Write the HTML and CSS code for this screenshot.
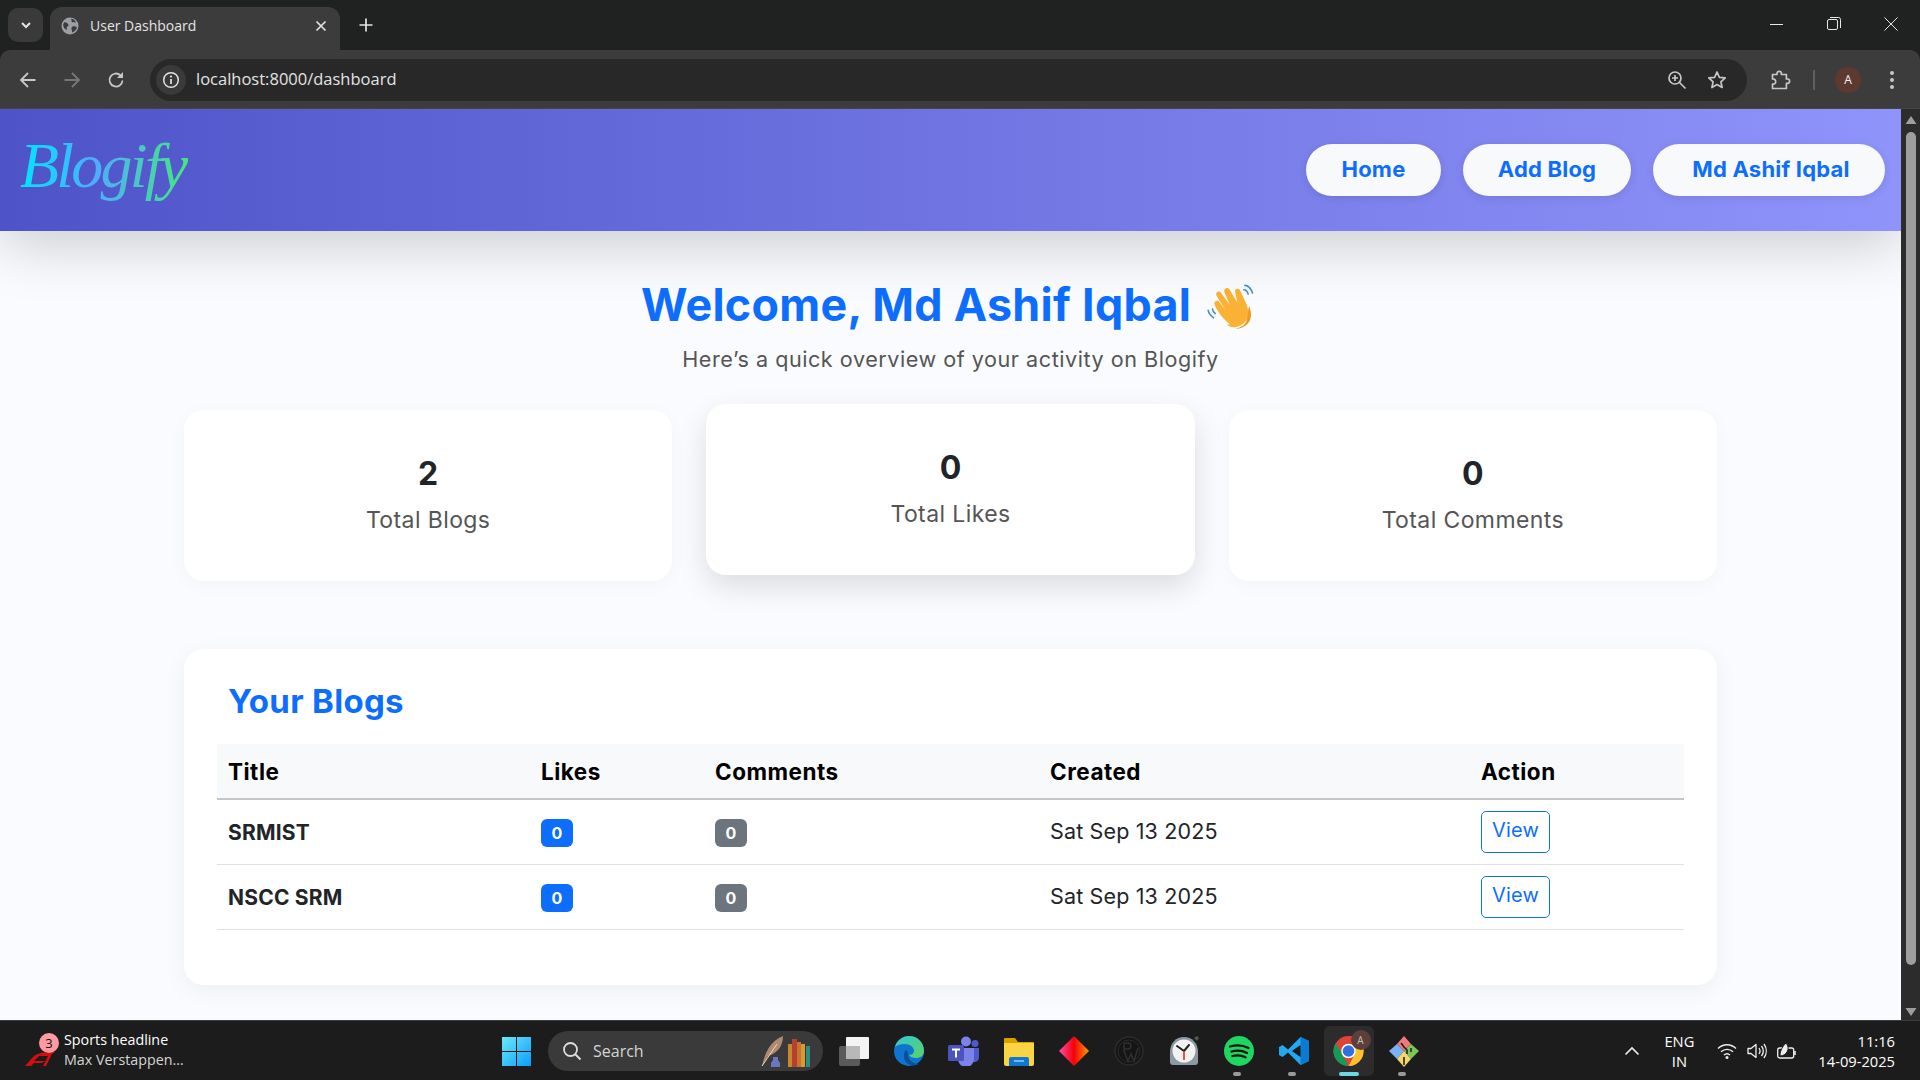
FILE: index.html
```html
<!DOCTYPE html>
<html lang="en">
<head>
<meta charset="utf-8">
<title>User Dashboard</title>
<link rel="stylesheet" href="styles.css">
</head>
<body>
<div class="browser">
  <div class="tabstrip">
    <div class="tablist-btn">
      <svg width="14" height="14" viewBox="0 0 14 14"><path d="M3 5l4 4 4-4" fill="none" stroke="#e3e3e3" stroke-width="2"/></svg>
    </div>
    <div class="tab">
      <svg class="tab-fav" width="18" height="18" viewBox="0 0 18 18"><circle cx="9" cy="9" r="8.5" fill="#9aa0a6"/><path d="M3 5.5c2-.5 3 .5 4 1.5s.5 2-.5 2.5-1 2-.5 3.500c-2-.5-4-3-3.800-5.500zM10 1.500c1 1.500 0 3 1 3.500s2.500 0 4 .5c-.8-2-2.800-3.700-5-4zM11.500 9.500c1.500-.5 3.500 0 4.500 1-.5 2-2.500 4.500-5 5 .5-1.500-.5-2.500-.5-3.500s0-2 1-2.500z" fill="#3c3c3c"/></svg>
      <span class="tab-title">User Dashboard</span>
      <svg class="tab-close" width="12" height="12" viewBox="0 0 12 12"><path d="M1.500 1.500l9 9m0-9l-9 9" stroke="#e3e3e3" stroke-width="1.700"/></svg>
    </div>
    <svg class="tab-new" width="14" height="14" viewBox="0 0 14 14"><path d="M7 .5v13M.5 7h13" stroke="#e3e3e3" stroke-width="1.700"/></svg>
    <div class="winctl">
      <svg width="14" height="14" viewBox="0 0 14 14"><path d="M0 7.500h13" stroke="#e8e8e8"/></svg>
      <svg width="14" height="14" viewBox="0 0 14 14"><rect x=".5" y="2.500" width="10" height="10" rx="1.500" fill="none" stroke="#e8e8e8"/><path d="M3 .5h8.500a2 2 0 0 1 2 2V11" fill="none" stroke="#e8e8e8"/></svg>
      <svg width="14" height="14" viewBox="0 0 14 14"><path d="M.5.5l13 13m0-13l-13 13" stroke="#e8e8e8"/></svg>
    </div>
  </div>

  <div class="toolbar">
    <div class="nav-icons">
      <svg width="18" height="18" viewBox="0 0 18 18"><path d="M16.500 9H2M9 2L2 9l7 7" fill="none" stroke="#c7c7c7" stroke-width="1.800"/></svg>
      <svg width="18" height="18" viewBox="0 0 18 18"><path d="M1.500 9H16M9 2l7 7-7 7" fill="none" stroke="#777" stroke-width="1.800"/></svg>
      <svg width="18" height="18" viewBox="0 0 18 18"><path d="M15.500 9.500A6.500 6.500 0 1 1 13.500 4.300L15.500 6" fill="none" stroke="#c7c7c7" stroke-width="1.800"/><path d="M16 1v6h-6z" fill="#c7c7c7"/></svg>
    </div>
    <div class="omnibox">
      <div class="info-chip">
        <svg width="18" height="18" viewBox="0 0 18 18"><circle cx="9" cy="9" r="7.300" fill="none" stroke="#e3e3e3" stroke-width="1.500"/><path d="M9 8v5" stroke="#e3e3e3" stroke-width="1.700"/><circle cx="9" cy="5.500" r="1.100" fill="#e3e3e3"/></svg>
      </div>
      <span class="url">localhost:8000/dashboard</span>
      <div class="omni-actions">
        <svg width="20" height="20" viewBox="0 0 20 20"><circle cx="8" cy="8" r="6" fill="none" stroke="#c7c7c7" stroke-width="1.700"/><path d="M12.500 12.500l6 6M8 5v6M5 8h6" stroke="#c7c7c7" stroke-width="1.700"/></svg>
        <svg width="20" height="20" viewBox="0 0 20 20"><path d="M10 2l2.400 5.300 5.800.6-4.300 3.900 1.200 5.700-5.100-2.900-5.100 2.900 1.200-5.700L1.800 7.900l5.800-.6z" fill="none" stroke="#c7c7c7" stroke-width="1.700" stroke-linejoin="round"/></svg>
      </div>
    </div>
    <div class="tool-icons">
      <svg width="20" height="22" viewBox="0 0 20 22"><path d="M1.500 5.500h4.500v-1a2.200 2.200 0 0 1 4.400 0v1h5v4.500h1a2.200 2.200 0 0 1 0 4.400h-1v5.100H1.500v-4.500c2 .5 3.200-.8 3.200-2.300S3.500 9.500 1.500 10z" fill="none" stroke="#c7c7c7" stroke-width="1.700" stroke-linejoin="round"/></svg>
      <span class="tool-sep"></span>
      <span class="avatar">A</span>
      <svg width="6" height="20" viewBox="0 0 6 20"><circle cx="3" cy="3" r="2" fill="#c7c7c7"/><circle cx="3" cy="10" r="2" fill="#c7c7c7"/><circle cx="3" cy="17" r="2" fill="#c7c7c7"/></svg>
    </div>
  </div>

  <div class="viewport">
    <div class="page">
      <header class="site-header">
        <a class="logo">Blogify</a>
        <nav class="site-nav">
          <a class="pill pill-home">Home</a>
          <a class="pill pill-add">Add Blog</a>
          <a class="pill pill-user">Md Ashif Iqbal</a>
        </nav>
      </header>
      <main class="content">
        <div class="welcome">
          <h1 class="welcome-title">Welcome, Md Ashif Iqbal
            <svg class="wave" width="54" height="50" viewBox="0 0 50 46">
              <path d="M22 39C14 33 9 24 8 21c-1-3 2-5 4-3l6 8-8-13c-2-3 2-6 4-3l8 11-5-12c-1-3 3-5 5-2l7 12-2-10c-.5-3 3-4 4.500-1.500l6 13c3 8 2 14-3 18s-12 4-15 1z" fill="#f9b233"/>
              <path d="M40 22c3 8 2 14-3 18-3 2.500-7 3.500-10 3 6-1 10-4 11-9 1-4 .5-8 2-12z" fill="#ee9a1f"/>
              <path d="M36 3c3 0 6 3 7 7M35 7c2 0 3.500 2 4 4M2 26c.5 3 2 5 5 7M6 25c.3 2 1 3 2.500 4" fill="none" stroke="#4a90c8" stroke-width="1.500" stroke-linecap="round"/>
            </svg>
          </h1>
          <p class="welcome-sub">Here’s a quick overview of your activity on Blogify</p>
        </div>
        <section class="stats">
          <div class="stat-card"><div class="stat-num">2</div><div class="stat-label">Total Blogs</div></div>
          <div class="stat-card stat-raised"><div class="stat-num">0</div><div class="stat-label">Total Likes</div></div>
          <div class="stat-card"><div class="stat-num">0</div><div class="stat-label">Total Comments</div></div>
        </section>
        <section class="blogs-card">
          <h2 class="blogs-title">Your Blogs</h2>
          <table class="blogs-table">
            <colgroup><col class="c-title"><col class="c-likes"><col class="c-comments"><col class="c-created"><col class="c-action"></colgroup>
            <thead>
              <tr><th>Title</th><th>Likes</th><th>Comments</th><th>Created</th><th>Action</th></tr>
            </thead>
            <tbody>
              <tr>
                <td class="blog-name">SRMIST</td>
                <td><span class="badge badge-blue">0</span></td>
                <td><span class="badge badge-gray">0</span></td>
                <td class="blog-date">Sat Sep 13 2025</td>
                <td><a class="view-btn">View</a></td>
              </tr>
              <tr>
                <td class="blog-name">NSCC SRM</td>
                <td><span class="badge badge-blue">0</span></td>
                <td><span class="badge badge-gray">0</span></td>
                <td class="blog-date">Sat Sep 13 2025</td>
                <td><a class="view-btn">View</a></td>
              </tr>
            </tbody>
          </table>
        </section>
      </main>
    </div>
    <div class="scrollbar">
      <svg width="12" height="10" viewBox="0 0 12 10"><path d="M6 1l5.500 8H.5z" fill="#9e9e9e"/></svg>
      <div class="scroll-thumb"></div>
      <svg width="12" height="10" viewBox="0 0 12 10"><path d="M6 9L.5 1h11z" fill="#9e9e9e"/></svg>
    </div>
  </div>

  <footer class="taskbar">
    <div class="news">
      <div class="news-icon">
        <svg width="30" height="16" viewBox="0 0 30 16"><path d="M0 16L8 7C12 3 18 2 30 2L24 6H14L9 11h11l-3 2H9L6 16zM27 4l-6 12h-3l6-12z" fill="#d40d0d"/></svg>
        <span class="news-badge">3</span>
      </div>
      <div class="news-text"><span class="news-head">Sports headline</span><span class="news-sub">Max Verstappen...</span></div>
    </div>
    <div class="task-center">
      <svg class="win" width="29" height="29" viewBox="0 0 29 29">
        <defs><linearGradient id="w" x1="0" y1="0" x2="1" y2="1"><stop offset="0" stop-color="#6ce8fb"/><stop offset="1" stop-color="#0b9cfb"/></linearGradient></defs>
        <path d="M0 0h14v14H0zM15 0h14v14H15zM0 15h14v14H0zM15 15h14v14H15z" fill="url(#w)"/>
      </svg>
      <div class="search">
        <svg width="20" height="20" viewBox="0 0 20 20"><circle cx="8.500" cy="8.500" r="6.500" fill="none" stroke="#ddd" stroke-width="1.800"/><path d="M13 13l5.500 5.500" stroke="#ddd" stroke-width="2"/></svg>
        <span class="search-label">Search</span>
        <svg class="search-art" width="52" height="32" viewBox="0 0 52 32">
          <path d="M1 31C4 18 9 6 22 1c0 7-3 14-10 18l-5 2z" fill="#b08a6e"/><path d="M1 31L16 9" stroke="#e8dcc8" stroke-width="1"/>
          <path d="M12 22h5v3l2 3v4h-9v-4l2-3z" fill="#6b76c0"/>
          <path d="M27 9h4v23h-4z" fill="#c7862f"/><path d="M31 4h5v28h-5z" fill="#b5402f"/><path d="M36 7h4v25h-4z" fill="#c9742e"/><path d="M40 9h4v23h-4z" fill="#d39a35"/><path d="M45 11h4v21h-4z" fill="#2f8c7e"/>
        </svg>
      </div>
      <div class="apps">
        <div class="app">
          <svg width="30" height="30" viewBox="0 0 30 30"><rect x="0" y="10" width="21" height="20" rx="2" fill="#5a5a5a"/><rect x="7" y="1" width="23" height="22" rx="1" fill="#f4f4f4"/><rect x="7" y="10" width="14" height="13" fill="#b8b8b8"/></svg>
        </div>
        <div class="app">
          <svg width="30" height="32" viewBox="0 0 30 32">
            <defs><linearGradient id="e1" x1="0" y1="0" x2="1" y2="1"><stop offset="0" stop-color="#36c7d0"/><stop offset="1" stop-color="#5bd16a"/></linearGradient></defs>
            <circle cx="15" cy="16" r="15" fill="#0f74cd"/>
            <path d="M1 12C3 5 9 1 15 1c8 0 15 6 15 15 0 5-4 7-8 7-3 0-6-1-7-3 3 0 5-2 5-4 0-4-4-7-9-7-4 0-8 1-10 3z" fill="url(#e1)"/>
            <path d="M12 15c-3 3-3 9 1 13 3 3 9 3 12 1-6 0-11-4-11-9 0-2 0-4-2-5z" fill="#0b4f9c"/>
          </svg>
        </div>
        <div class="app">
          <svg width="32" height="30" viewBox="0 0 32 30">
            <circle cx="18" cy="5.500" r="5" fill="#7b83eb"/><circle cx="27" cy="7.500" r="3.500" fill="#5059c9"/>
            <path d="M22 12h9v10a5 5 0 0 1-9 2z" fill="#5059c9"/><path d="M10 12h16v11a8 8 0 0 1-16 0z" fill="#7b83eb"/>
            <rect x="0" y="9" width="16" height="16" rx="1.500" fill="#4b53bc"/>
            <path d="M4 12.500h8v2H9v7H7v-7H4z" fill="#fff"/>
          </svg>
        </div>
        <div class="app">
          <svg width="30" height="30" viewBox="0 0 30 30"><path d="M0 3a1 1 0 0 1 1-1h10l3 4h15a1 1 0 0 1 1 1v4H0z" fill="#d9a000"/><path d="M0 7h30v21a2 2 0 0 1-2 2H2a2 2 0 0 1-2-2z" fill="#fbd444"/><path d="M5 30v-7a2 2 0 0 1 2-2h16a2 2 0 0 1 2 2v7z" fill="#0f78d4"/><path d="M10 25h10" stroke="#8fd0ff" stroke-width="1.500"/></svg>
        </div>
        <div class="app">
          <svg width="30" height="32" viewBox="0 0 30 32"><defs><linearGradient id="d" x1="0" y1="0" x2="1" y2="0"><stop offset="0" stop-color="#ff4fa3"/><stop offset=".5" stop-color="#f4000a"/><stop offset="1" stop-color="#ff9a00"/></linearGradient></defs><path d="M15 1l15 15-15 15L0 16z" fill="url(#d)"/></svg>
        </div>
        <div class="app">
          <svg width="30" height="30" viewBox="0 0 30 30"><circle cx="15" cy="15" r="14" fill="#151515" stroke="#2b2b2b" stroke-width="1.500"/><circle cx="15" cy="15" r="11" fill="none" stroke="#2b2b2b"/><path d="M10 7v9M10 7h4a3 3 0 0 1 0 6h-4M10 15l4 10 3-7 3 7 4-13" fill="none" stroke="#303030" stroke-width="1.500"/></svg>
        </div>
        <div class="app">
          <svg width="30" height="32" viewBox="0 0 30 32"><path d="M4 30c-2 0-3-1-3-3V17C1 8 7 2 15 2s14 6 14 15v10c0 2-1 3-3 3z" fill="#8d98a3"/><circle cx="15" cy="16" r="11.500" fill="#f2f2f2"/><path d="M15 16L8 11M15 16l5-6" stroke="#222" stroke-width="2" stroke-linecap="round"/><path d="M15 16v9" stroke="#d9421c" stroke-width="1.700"/><path d="M25 3l3-2 2 2-2 3z" fill="#555"/></svg>
        </div>
        <div class="app app-running">
          <svg width="30" height="30" viewBox="0 0 30 30"><circle cx="15" cy="15" r="15" fill="#1ed760"/><path d="M6 10.500c6-1.700 13-1.300 18.500 1.500M7.500 15.500c5-1.400 11-1 15.500 1.400M8.500 20c4.500-1.100 9-.8 13 1.200" fill="none" stroke="#111" stroke-width="2.300" stroke-linecap="round"/></svg>
        </div>
        <div class="app app-running">
          <svg width="30" height="30" viewBox="0 0 30 30"><path d="M21.500 1L30 5v20l-8.500 4L9 16.500 3.500 21 0 19V11l3.500-2L9 13.500z" fill="#23a9f2"/><path d="M21.500 1L30 5v20l-8.500 4zM21.500 9L13 15l8.500 6z" fill="#0a7bd0"/><path d="M21.500 9L13 15l8.500 6z" fill="#1c1c1c"/></svg>
        </div>
        <div class="app app-active">
          <svg width="31" height="32" viewBox="0 0 32 32"><circle cx="16" cy="16" r="15.500" fill="#db4437"/><path d="M16 .5A15.500 15.500 0 0 1 30 9H16z" fill="#db4437"/><path d="M2.800 8L10 20.500 16 31.500A15.500 15.500 0 0 1 2.800 8z" fill="#0f9d58"/><path d="M30 9a15.500 15.500 0 0 1-14 22.500l6-11V9z" fill="#fbc02d"/><circle cx="16" cy="16" r="7.500" fill="#fff"/><circle cx="16" cy="16" r="6" fill="#2f6fe0"/></svg>
          <span class="chrome-avatar">A</span>
        </div>
        <div class="app app-running">
          <svg width="30" height="32" viewBox="0 0 30 32"><path d="M15 1l7 8-7 7-7-7z" fill="#f07a7a"/><path d="M8 9l7 7-7 8-8-8z" fill="#7bb1f5"/><path d="M22 9l8 7-8 8-7-8z" fill="#7dc55a"/><path d="M15 16l7 8-7 8-7-8z" fill="#f5d76e"/><path d="M15 30v-8M12 8l3 4 3 3v4M22 13v4" stroke="#1c1c1c" stroke-width="1.500" fill="none"/></svg>
        </div>
      </div>
    </div>
    <div class="tray">
      <svg width="16" height="10" viewBox="0 0 16 10"><path d="M1.500 8.500L8 2l6.500 6.500" fill="none" stroke="#eee" stroke-width="1.600"/></svg>
      <div class="lang"><span>ENG</span><span>IN</span></div>
      <div class="tray-icons">
        <svg width="20" height="18" viewBox="0 0 20 18"><path d="M1 6.500c5-5 13-5 18 0M4 9.800c3.500-3.300 8.500-3.300 12 0M7 13c1.700-1.500 4.300-1.500 6 0" fill="none" stroke="#eee" stroke-width="1.400"/><circle cx="10" cy="15.500" r="1.500" fill="#eee"/></svg>
        <svg width="20" height="18" viewBox="0 0 20 18"><path d="M1 6.500h3l5-4v13l-5-4H1z" fill="none" stroke="#eee" stroke-width="1.300" stroke-linejoin="round"/><path d="M12 6c1.200 1.700 1.200 4.300 0 6M14.500 4c2.200 3 2.200 7 0 10M17 2c3 4.200 3 9.800 0 14" fill="none" stroke="#eee" stroke-width="1.300"/></svg>
        <svg width="20" height="18" viewBox="0 0 20 18"><rect x=".7" y="6" width="16" height="10" rx="2" fill="none" stroke="#eee" stroke-width="1.300"/><path d="M18 9v4" stroke="#eee" stroke-width="1.600"/><path d="M3 14c0-6 3-10 6-13 2 3 3 5 1 9-1 2-4 4-7 4z" fill="#eee" stroke="#1c1c1c"/></svg>
      </div>
      <div class="clock"><span>11:16</span><span>14-09-2025</span></div>
    </div>
  </footer>
</div>
</body>
</html>
```

FILE: styles.css
```css
* { box-sizing: border-box; }
html, body { margin: 0; padding: 0; height: 100%; overflow: hidden; }
body { font-family: "Inter", "Liberation Sans", sans-serif; }
a { text-decoration: none; }

.browser { display: flex; flex-direction: column; width: 1920px; height: 1080px; background: #202221; }

/* Tab strip */
.tabstrip { display: flex; align-items: flex-end; height: 50px; flex: none; padding-left: 8px; background: #202221; }
.tablist-btn { display: flex; align-items: center; justify-content: center; width: 35px; height: 34px; margin-bottom: 8px; border-radius: 10px; background: #3a3a3a; }
.tab { display: flex; align-items: center; width: 290px; height: 43px; margin-left: 7px; padding: 0 13px 6px 11px; background: #3c3c3c; border-radius: 12px 12px 0 0; }
.tab-fav { flex: none; }
.tab-title { flex: 1; margin-left: 11px; font: 14px "Open Sans", sans-serif; color: #e3e3e3; white-space: nowrap; }
.tab-new { margin: 0 0 18px 19px; }
.winctl { display: flex; gap: 43px; margin: 0 22px 19px auto; }

/* Toolbar */
.toolbar { display: flex; align-items: center; height: 59px; flex: none; padding: 1px 0 0; background: #3c3c3c; border-radius: 10px 10px 0 0; border-bottom: 1px solid #454545; }
.nav-icons { display: flex; gap: 26px; width: 150px; padding-left: 19px; }
.omnibox { display: flex; align-items: center; width: 1597px; height: 42px; padding: 0 20px 0 6px; background: #282828; border-radius: 21px; }
.info-chip { display: flex; align-items: center; justify-content: center; width: 30px; height: 30px; border-radius: 50%; background: #3a3a3a; }
.url { margin: -2px 0 0 10px; font: 16.500px "Open Sans", sans-serif; color: #e3e3e3; white-space: nowrap; }
.omni-actions { display: flex; gap: 20px; margin-left: auto; }
.tool-icons { display: flex; align-items: center; padding-left: 24px; }
.tool-sep { width: 2px; height: 20px; margin-left: 22px; background: #5e5e5e; }
.avatar { display: flex; align-items: center; justify-content: center; width: 26px; height: 26px; margin: 0 28px 0 20px; border-radius: 50%; background: #5c3a30; color: #f3f3f3; font: 12px "Open Sans", sans-serif; }

/* Viewport */
.viewport { display: flex; flex: 1; min-height: 0; }
.page { flex: 1; min-width: 0; overflow: hidden; background: #f9fbff; }
.scrollbar { display: flex; flex-direction: column; align-items: center; width: 19px; flex: none; padding: 6px 0 3px; background: #2c2c2c; }
.scroll-thumb { width: 10px; height: 833px; margin: 7px 0 auto; border-radius: 5px; background: #9e9e9e; }

/* Site header */
.site-header { display: flex; align-items: center; justify-content: space-between; height: 122px; padding: 0 16px 0 20px; background: linear-gradient(90deg, #4e54c8, #8f94fb); box-shadow: 0 12px 60px rgba(0, 0, 0, .2); position: relative; }
.logo { font: italic 400 64px "Liberation Serif", serif; letter-spacing: -2.800px; line-height: 1; padding: 0 4px 8px 0; background: linear-gradient(90deg, #00e5ff, #4facfe 45%, #43e97b); -webkit-background-clip: text; background-clip: text; color: transparent; }
.site-nav { display: flex; gap: 22px; }
.pill { display: flex; align-items: center; justify-content: center; height: 52px; padding-bottom: 2px; border-radius: 26px; background: #f8f9fa; color: #0d6efd; font-weight: 700; font-size: 22px; letter-spacing: .2px; box-shadow: 0 2px 8px rgba(0, 0, 0, .1); }
.pill-home { width: 135px; }
.pill-add { width: 168px; }
.pill-user { width: 232px; padding-left: 4px; }

/* Main */
.content { width: 1533px; margin-left: 184px; }
.welcome { padding-top: 44px; text-align: center; }
.welcome-title { margin: 0; font-size: 44.800px; line-height: 60px; font-weight: 700; color: #0d6efd; letter-spacing: .3px; }
.wave { vertical-align: -11px; margin-left: 4px; }
.welcome-sub { margin: 9px 0 0; font-size: 21.600px; line-height: 30px; letter-spacing: .53px; color: #555; }

.stats { display: grid; grid-template-columns: repeat(3, 1fr); gap: 34px; margin-top: 36px; }
.stat-card { height: 171px; padding-top: 43px; text-align: center; background: #fff; border-radius: 20px; box-shadow: 0 4px 20px rgba(0, 0, 0, .03); }
.stat-raised { transform: translateY(-6px); box-shadow: 0 12px 30px rgba(0, 0, 0, .12); }
.stat-num { font-size: 32px; line-height: 42px; font-weight: 700; color: #212529; }
.stat-label { margin-top: 7px; font-size: 23px; line-height: 36px; letter-spacing: .4px; color: #555; }

.blogs-card { height: 336px; margin-top: 68px; padding: 29px 33px 0; background: #fff; border-radius: 20px; box-shadow: 0 6px 25px rgba(0, 0, 0, .05); }
.blogs-title { margin: 0; padding-left: 11px; font-size: 33px; line-height: 46px; font-weight: 700; letter-spacing: .3px; color: #0d6efd; }
.blogs-table { width: 1467px; margin-top: 20px; border-collapse: collapse; table-layout: fixed; }
.c-title { width: 313px; }
.c-likes { width: 174px; }
.c-comments { width: 335px; }
.c-created { width: 431px; }
.c-action { width: 214px; }
.blogs-table th { height: 55px; padding: 0 11px; text-align: left; font-size: 22.500px; font-weight: 700; letter-spacing: .5px; color: #000; background: #f8f9fa; border-bottom: 2px solid #c4c6c9; }
.blogs-table td { height: 65px; padding: 0 11px; font-size: 21.500px; letter-spacing: .15px; color: #212529; border-bottom: 1px solid #dee2e6; }
.blogs-table .blog-name { padding-top: 2px; font-weight: 700; font-size: 21px; letter-spacing: .2px; }
.blogs-table .blog-date { padding-bottom: 2px; }
.badge { display: inline-flex; align-items: center; justify-content: center; width: 32px; height: 28px; margin-top: 3px; border-radius: 6px; color: #fff; font-size: 16px; font-weight: 700; vertical-align: middle; }
.badge-blue { background: #0d6efd; }
.badge-gray { background: #6c757d; }
.view-btn { display: inline-flex; align-items: center; justify-content: center; width: 69px; height: 42px; padding-bottom: 3px; border: 1px solid #0d6efd; border-radius: 5px; color: #0d6efd; font-size: 20px; vertical-align: middle; }

/* Taskbar */
.taskbar { display: flex; align-items: center; height: 60px; flex: none; background: #1c1c1c; border-top: 1px solid #3c3c3c; }
.news { display: flex; align-items: center; width: 502px; padding-left: 25px; }
.news-icon { position: relative; width: 30px; height: 40px; flex: none; display: flex; align-items: flex-end; }
.news-icon svg { margin-bottom: 5px; }
.news-badge { position: absolute; top: 2px; left: 14px; width: 20px; height: 20px; border-radius: 50%; background: #ff9aa2; color: #111; font: 13px/20px "Open Sans", sans-serif; text-align: center; }
.news-text { display: flex; flex-direction: column; margin: -2px 0 0 9px; font: 14.300px/20px "Open Sans", sans-serif; white-space: nowrap; }
.news-head { color: #fff; }
.news-sub { color: #d4d4d4; }
.task-center { display: flex; align-items: center; }
.win { flex: none; margin-top: 1px; }
.search { display: flex; align-items: center; width: 275px; height: 40px; margin-left: 17px; padding: 0 10px 0 14px; border-radius: 20px; background: #3a3a3a; }
.search-label { margin-left: 11px; font: 16px "Open Sans", sans-serif; color: #d4d4d4; }
.search-art { margin-left: auto; }
.apps { display: flex; margin-left: 3px; }
.app { position: relative; display: flex; align-items: center; justify-content: center; width: 55px; height: 50px; }
.app-running::after { content: ""; position: absolute; left: 22px; bottom: 0; width: 8px; height: 4px; border-radius: 2px; background: #9a9a9a; }
.app-active { width: 50px; margin: 0 2.500px; border-radius: 6px; background: #2c2c2c; }
.app-active::after { content: ""; position: absolute; left: 15px; bottom: 0; width: 20px; height: 4px; border-radius: 2px; background: #6fd7e4; }
.chrome-avatar { position: absolute; top: 4px; right: 3px; width: 20px; height: 20px; border-radius: 50%; background: #5c3f39; color: #c8bfbb; font: 10px/20px "Open Sans", sans-serif; text-align: center; }
.tray { display: flex; align-items: center; margin-left: auto; color: #fff; font: 14.700px/20px "Open Sans", sans-serif; padding-right: 25px; }
.lang { display: flex; flex-direction: column; align-items: center; margin-left: 24px; }
.tray-icons { display: flex; gap: 10px; margin-left: 23px; }
.clock { display: flex; flex-direction: column; align-items: flex-end; margin-left: 21px; }
```
